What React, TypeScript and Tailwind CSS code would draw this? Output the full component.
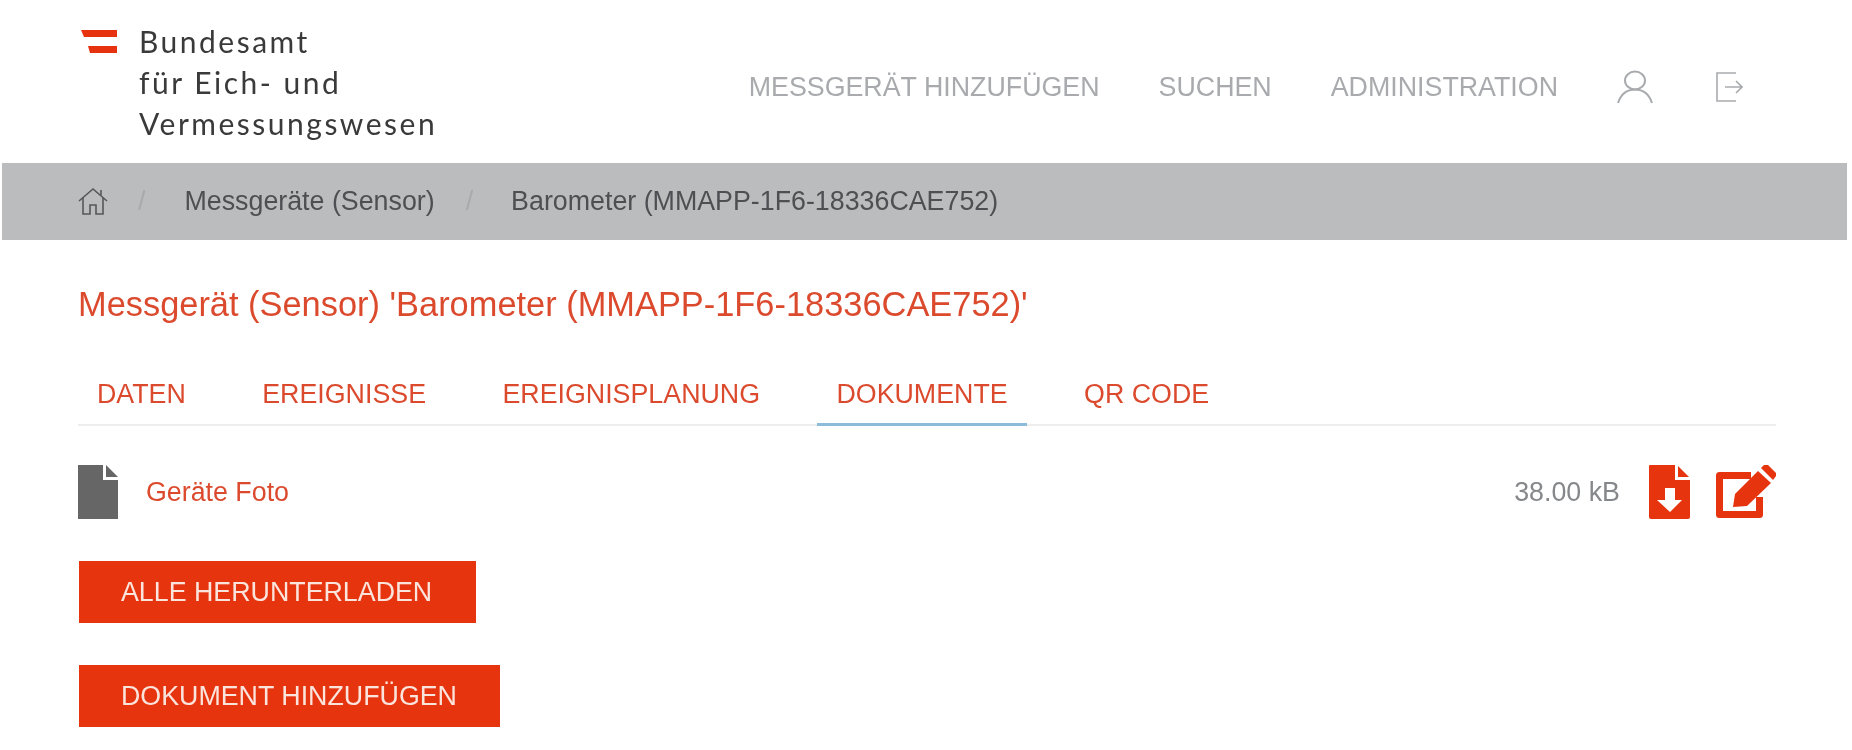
import React from "react";

const sans = "font-['Liberation_Sans',Arial,sans-serif]";

function Logo() {
  return (
    <div className="flex items-start">
      <svg width="36" height="24" viewBox="0 0 36 24" className="mt-[30px] shrink-0" aria-hidden="true">
        <polygon points="0,0 36,0 36,7 3,7" fill="#e6320f" />
        <polygon points="7,16 36,16 36,23 9,23" fill="#e6320f" />
      </svg>
      <div className="ml-[22px] mt-[21px] font-['Lato',sans-serif] text-[30px] leading-[41px] tracking-[2.5px] text-[#3a3a3a]">
        <div>Bundesamt</div>
        <div>für Eich- und</div>
        <div>Vermessungswesen</div>
      </div>
    </div>
  );
}

function Header() {
  return (
    <header className="flex h-[163px] items-start justify-between pl-[81px] pr-[109px]">
      <Logo />
      <nav className={`flex items-center gap-[59px] pt-[68px] text-[26.8px] leading-[38px] text-[#a8aaad] ${sans}`}>
        <span>MESSGERÄT HINZUFÜGEN</span>
        <span>SUCHEN</span>
        <span>ADMINISTRATION</span>
        <svg width="36" height="34" viewBox="0 0 36 34" fill="none" stroke="#a8aaad" strokeWidth="2" aria-hidden="true">
          <ellipse cx="18" cy="10.5" rx="10" ry="9" />
          <path d="M1 33 C4 24 10 19.5 18 19.5 C26 19.5 32 24 35 33" />
        </svg>
        <svg width="27" height="30" viewBox="0 0 27 30" fill="none" stroke="#a8aaad" strokeWidth="1.6" className="ml-[4px]" aria-hidden="true">
          <path d="M20 1 H1 V29 H20" />
          <path d="M9 15 H26 M20 9 L26 15 L20 21" />
        </svg>
      </nav>
    </header>
  );
}

function Breadcrumb() {
  return (
    <div className={`ml-[2px] mr-[5px] flex h-[77px] items-center bg-[#bbbcbe] pl-[76px] text-[26.8px] text-[#4d4f52] ${sans}`}>
      <svg width="30" height="29" viewBox="0 0 30 29" fill="none" stroke="#55575a" strokeWidth="1.6" aria-hidden="true">
        <path d="M1 14 L15 2 L29 14" />
        <path d="M5 11 V27 H12 V18 H18 V27 H25 V11" />
        <path d="M23 3 V8" />
      </svg>
      <span className="ml-[30px] text-[#a9aaac]">/</span>
      <span className="ml-[39px]">Messgeräte (Sensor)</span>
      <span className="ml-[31px] text-[#a9aaac]">/</span>
      <span className="ml-[38px]">Barometer (MMAPP-1F6-18336CAE752)</span>
    </div>
  );
}

function Tabs() {
  const tabs = ["DATEN", "EREIGNISSE", "EREIGNISPLANUNG", "DOKUMENTE", "QR CODE"];
  return (
    <div className="mt-[40px] flex h-[62px] gap-[38.4px] border-b-2 border-[#eeeeee] text-[26.8px] text-[#dc4a2e]">
      {tabs.map((t) =>
        t === "DOKUMENTE" ? (
          <div key={t} className="mb-[-2px] flex items-center border-b-[3px] border-[#8cbcd9] px-[19px] pt-[2px]">{t}</div>
        ) : (
          <div key={t} className="mb-[-2px] flex items-center border-b-[3px] border-transparent px-[19px] pt-[2px]">{t}</div>
        )
      )}
    </div>
  );
}

function FileIcon() {
  return (
    <svg width="40" height="54" viewBox="0 0 40 54" fill="#666666" aria-hidden="true">
      <path d="M0 0 H25 V15 H40 V54 H0 Z" />
      <polygon points="28,0 40,12 28,12" />
    </svg>
  );
}

function DownloadIcon() {
  return (
    <svg width="41" height="54" viewBox="0 0 41 54" className="ml-[29px]" aria-hidden="true">
      <path d="M1 0 H26 V15 H41 V52 Q41 54 39 54 H2 Q0 54 0 52 V1 Q0 0 1 0 Z" fill="#e6340f" />
      <polygon points="29,1 40,12 29,12" fill="#e6340f" />
      <polygon points="16,23 26,23 26,35 33,35 21,47 8,35 16,35" fill="#ffffff" />
    </svg>
  );
}

function EditIcon() {
  return (
    <svg width="61" height="54" viewBox="0 0 61 54" className="ml-[26px] mr-[-1px]" aria-hidden="true">
      <path d="M35 10.5 H3.5 V49.5 H43.5 V32" fill="none" stroke="#e6340f" strokeWidth="7" strokeLinejoin="round" />
      <polygon points="17,42 19,29 42,6 55,18 31,41" fill="#e6340f" />
      <polygon points="45,3 48,0 52,0 60,8 60,11 57,15" fill="#e6340f" />
    </svg>
  );
}

function FileRow() {
  return (
    <div className="mt-[39px] flex h-[54px] items-center justify-between">
      <div className="flex items-center">
        <FileIcon />
        <span className="ml-[28px] text-[26.8px] text-[#dc4a2e]">Geräte Foto</span>
      </div>
      <div className="flex items-center">
        <span className="text-[26.8px] text-[#85878a]">38.00 kB</span>
        <DownloadIcon />
        <EditIcon />
      </div>
    </div>
  );
}

function Btn({ label, w }: { label: string; w: string }) {
  return (
    <button className={`flex h-[62px] ${w} items-center bg-[#e6340f] pl-[42px] text-[26.8px] text-[#fbe4dc]`}>
      {label}
    </button>
  );
}

export default function App() {
  return (
    <div className={`h-[750px] w-[1852px] overflow-hidden bg-white blur-[0.6px] ${sans}`}>
      <Header />
      <Breadcrumb />
      <main className="pl-[78px] pr-[76px]">
        <h1 className="mt-[44px] text-[34.4px] leading-[40px] text-[#dc4a2e]">Messgerät (Sensor) 'Barometer (MMAPP-1F6-18336CAE752)'</h1>
        <Tabs />
        <FileRow />
        <div className="ml-[1px] mt-[42px] flex flex-col gap-[42px]">
          <Btn label="ALLE HERUNTERLADEN" w="w-[397px]" />
          <Btn label="DOKUMENT HINZUFÜGEN" w="w-[421px]" />
        </div>
      </main>
    </div>
  );
}
